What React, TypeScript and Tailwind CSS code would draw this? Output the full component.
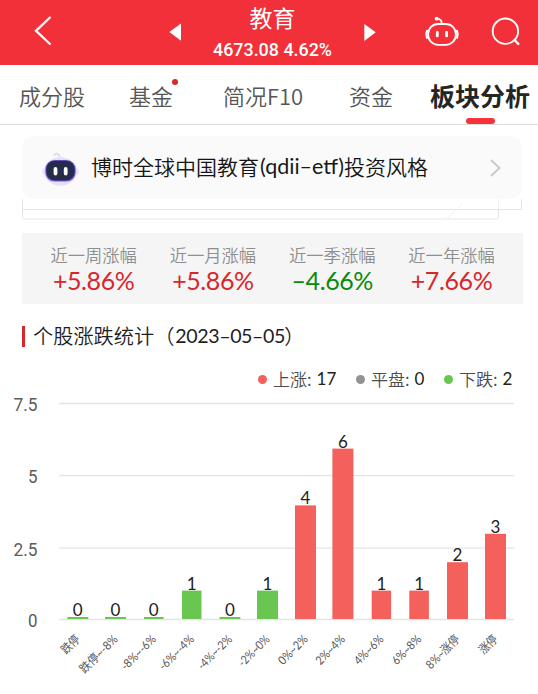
type Bar = {
  label: string
  value: number
  x: number
  w: number
  len: number
  up?: boolean
}

const tabs = [
  { name: '成分股', cls: 'w-[110px]' },
  { name: '基金', cls: 'w-[94px]', dot: true },
  { name: '简况F10', cls: 'w-[126px]' },
  { name: '资金', cls: 'w-[81px]' },
]

const stats = [
  { label: '近一周涨幅', value: '+5.86%', cls: 'text-[#d9262c]' },
  { label: '近一月涨幅', value: '+5.86%', cls: 'text-[#d9262c]' },
  { label: '近一季涨幅', value: '–4.66%', cls: 'text-[#0a8a0a]' },
  { label: '近一年涨幅', value: '+7.66%', cls: 'text-[#d9262c]' },
]

const legend = [
  { label: '上涨', value: 17, dot: 'bg-[#f4605b]', cls: 'w-[98px]' },
  { label: '平盘', value: 0, dot: 'bg-[#929292]', cls: 'w-[88px]' },
  { label: '下跌', value: 2, dot: 'bg-[#69c650]', cls: 'w-[72px]' },
]

const bars: Bar[] = [
  { label: '跌停', value: 0, x: 67.3, w: 21, len: 21 },
  { label: '跌停~-8%', value: 0, x: 105, w: 21, len: 48 },
  { label: '-8%~-6%', value: 0, x: 144, w: 19.6, len: 44 },
  { label: '-6%~-4%', value: 1, x: 182, w: 19.5, len: 44 },
  { label: '-4%~-2%', value: 0, x: 219.5, w: 20.8, len: 43 },
  { label: '-2%~0%', value: 1, x: 257, w: 21, len: 39 },
  { label: '0%~2%', value: 4, x: 295, w: 21, len: 36, up: true },
  { label: '2%~4%', value: 6, x: 332.4, w: 21, len: 36, up: true },
  { label: '4%~6%', value: 1, x: 371.7, w: 19.4, len: 36, up: true },
  { label: '6%~8%', value: 1, x: 409.3, w: 19.6, len: 36, up: true },
  { label: '8%~涨停', value: 2, x: 447, w: 21, len: 42, up: true },
  { label: '涨停', value: 3, x: 485, w: 21, len: 21, up: true },
]

const grid = [
  { label: '7.5', y: 403.5, len: 24 },
  { label: '5', y: 475.7, len: 9.5 },
  { label: '2.5', y: 548.2, len: 24 },
  { label: '0', y: 619.5, len: 9.5 },
]

const BASE = 619
const STEP = 28.4

function Header() {
  return <header className="flex h-[65px] bg-[#f23039] text-white">
    <svg className="h-[65px] w-[213px] shrink-0" viewBox="0 0 213 65" fill="none">
      <path d="M50.5 17 36 30.8 50.5 44.5" stroke="#fff" strokeWidth="2.3" />
      <path d="M181 23.5v17.2L169.3 32z" fill="#fff" />
    </svg>
    <div className="flex w-[119px] shrink-0 flex-col items-center whitespace-nowrap">
      <div className="h-[37px] text-[23px] leading-[34px]">教育</div>
      <svg className="h-6 w-[119px] overflow-visible" viewBox="0 0 119 24">
        <text x="0" y="18.8" textLength="119" lengthAdjust="spacingAndGlyphs" fill="#fff" className="font-['Roboto',sans-serif] text-[18.5px] font-medium">4673.08 4.62%</text>
      </svg>
    </div>
    <svg className="h-[65px] w-[206px] shrink-0" viewBox="332 0 206 65" fill="none">
      <path d="M364.3 24v17l11.4-8.7z" fill="#fff" />
      <g stroke="#fff" strokeWidth="1.8" strokeLinecap="round">
        <rect x="428.2" y="24" width="27.6" height="20.8" rx="9.8" />
        <path d="M427 30.8c-.8 2-.8 5 0 7M457 30.8c.8 2 .8 5 0 7" strokeWidth="2.2" />
        <path d="M441.6 23.5c.4-3-1.3-4.7-4.6-4.7" />
        <path d="M437.3 32.5v3.4M446.6 32.5v3.4" strokeWidth="2.8" />
      </g>
      <circle cx="436.6" cy="18.7" r="1.9" fill="#fff" />
      <circle cx="505.4" cy="31.2" r="12.7" stroke="#fff" strokeWidth="1.9" />
      <path d="m513.8 39.4 5.2 5.2" stroke="#fff" strokeWidth="2.2" />
    </svg>
  </header>
}

function Tabs() {
  return <nav className="flex h-[60px] border-b border-[#dcdcdc] pl-[19px] text-[22px] leading-[32px] font-[350] whitespace-nowrap text-[#555]">
    {tabs.map((t) => <div key={t.name} className={`${t.cls} flex shrink-0 pt-[14px]`}>
      <span>{t.name}</span>
      {t.dot && <i className="-ml-px size-[6px] rounded-full bg-[#d92a2a]" />}
    </div>)}
    <div className="flex w-[100px] shrink-0 flex-col items-center pt-[14px] text-[25px] font-bold text-[#252525]">
      <span>板块分析</span>
      <i className="mt-[7px] h-[6px] w-[29px] shrink-0 rounded-[3px] bg-[#f5333a]" />
    </div>
  </nav>
}

function FundCard() {
  return <section className="ml-[22px] w-[500px]">
    <div className="mt-[11px] flex h-[63px] items-center rounded-[12px] bg-[#fafafa]">
      <svg className="h-[38px] w-[60px] shrink-0" viewBox="22 149 60 38" fill="none">
        <path d="M54 155.5c1.5-3 5-2 6 1.5" stroke="#ddd8f0" strokeWidth="1.8" />
        <ellipse cx="60.6" cy="171.500" rx="18.300" ry="8" fill="#e6e1f8" />
        <ellipse cx="60.500" cy="171.500" rx="16.300" ry="14.300" fill="#e4dff8" />
        <rect x="45.300" y="160" width="30.400" height="21.600" rx="9" fill="#7a5bd8" />
        <rect x="46.300" y="160.700" width="28.400" height="19.800" rx="8.500" fill="#252b4a" />
        <path d="M55.500 169v4.500M65.700 169v4.500" stroke="#fff" strokeWidth="3.800" strokeLinecap="round" />
      </svg>
      <span className="-mt-[3px] ml-[9px] w-[372px] shrink-0 text-[21px] leading-[31px] font-[350] whitespace-nowrap text-[#141414]">
        博时全球中国教育<svg className="inline-block h-[31px] w-[85px] overflow-visible align-top" viewBox="0 0 85 31"><text x="1" y="22.500" textLength="84" lengthAdjust="spacingAndGlyphs" fill="#181818" className="font-['Lato',sans-serif] text-[20.500px] font-normal">(qdii–etf)</text></svg>投资风格
      </span>
      <svg className="ml-[24px] h-[20px] w-[16px]" viewBox="0 0 16 20" fill="none">
        <path d="m4 2 8.500 8-8.500 8" stroke="#c9c9c9" strokeWidth="1.800" />
      </svg>
    </div>
    <div className="h-[11px] border-x border-b border-[#e6e6e6]">
      <div className="ml-[424px] h-[10px] w-[52px] border-r border-[#f1f1f1]" />
    </div>
    <svg className="block h-[10px] w-[500px] overflow-visible" viewBox="0 0 500 10" fill="none">
      <path d="M.5 0v7q0 2 2 2h472q2 0 2-2V0" stroke="#e6e6e6" />
      <path d="m425 8 15-14" stroke="#f1f1f1" />
    </svg>
  </section>
}

function Chart() {
  return <svg className="block h-[302px] w-[538px]" viewBox="0 392 538 302">
    {grid.map((g) => <g key={g.label}>
      <path d={`M59 ${g.y}H514`} stroke="#e4e4e4" strokeWidth="1.3" />
      <text x="37.5" y={g.y + 7.5} textAnchor="end" textLength={g.len} lengthAdjust="spacingAndGlyphs" fill="#5b5b5b" className="font-['Roboto',sans-serif] text-[18.5px]">{g.label}</text>
    </g>)}
    {bars.map((b) => {
      const h = b.value ? b.value * STEP : 2
      const cx = b.x + b.w / 2
      return <g key={b.label}>
        <rect x={b.x} y={BASE - h} width={b.w} height={h} fill={b.up ? '#f4605b' : '#69c650'} />
        <text x={cx} y={BASE - h - 1} textAnchor="middle" fill="#222" className="font-['Lato',sans-serif] text-[17px]">{b.value}</text>
        <text
          textAnchor="end"
          textLength={b.len}
          lengthAdjust="spacingAndGlyphs"
          transform={`translate(${cx + 3} 640) rotate(-45)`}
          fill="#555"
          className="font-['Lato','Noto_Sans_CJK_SC',sans-serif] text-[12px]"
        >{b.label}</text>
      </g>
    })}
  </svg>
}

export default function App() {
  return <div className="h-[694px] w-[538px] overflow-hidden bg-white font-['Noto_Sans_CJK_SC',sans-serif]">
    <Header />
    <Tabs />
    <FundCard />
    <section className="mt-[13px] ml-[22px] flex h-[71px] w-[501px] bg-[#f5f5f5] pl-[12px]">
      {stats.map((s) => <div key={s.label} className="flex w-[119.3px] shrink-0 flex-col items-center pt-[9px] whitespace-nowrap">
        <span className="text-[17.3px] leading-[26px] font-[350] text-[#8e8e8e]">{s.label}</span>
        <span className={`${s.cls} -mt-[3px] font-['Lato',sans-serif] text-[25px] leading-[30px] tracking-[-0.4px]`}>{s.value}</span>
      </div>)}
    </section>
    <h2 className="mt-[18px] ml-[22px] flex h-[28px] items-center text-[20.2px] font-[350] whitespace-nowrap text-[#1e1e1e]">
      <i className="mr-[8px] h-[21px] w-[3px] bg-[#d9262c]" />
      <span>个股涨跌统计（</span>
      <span className="w-[110px] pl-px font-['Lato',sans-serif] text-[19.6px] font-normal tracking-[-0.4px]">2023–05–05</span>
      <span>）</span>
    </h2>
    <div className="mt-[16px] flex h-[26px] pl-[258px] text-[17px] font-[350] whitespace-nowrap text-[#4c4c4c]">
      {legend.map((l) => <div key={l.label} className={`${l.cls} flex shrink-0 items-center`}>
        <i className={`${l.dot} mr-[6px] size-[9px] shrink-0 rounded-full`} />
        <span>{l.label}:</span>
        <span className="ml-[5px] font-['Lato',sans-serif] font-normal text-[#222]">{l.value}</span>
      </div>)}
    </div>
    <Chart />
  </div>
}
